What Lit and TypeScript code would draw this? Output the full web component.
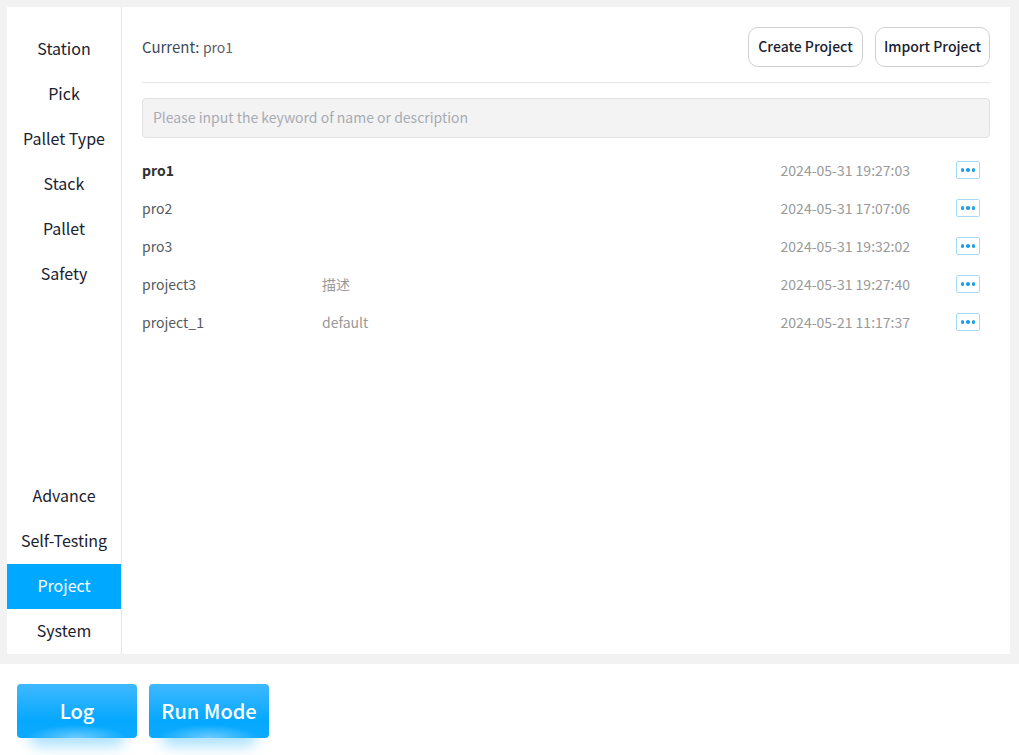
import { LitElement, html, css } from "lit";
import { customElement } from "lit/decorators.js";

const TOP = ["Station", "Pick", "Pallet Type", "Stack", "Pallet", "Safety"];
const BOTTOM = ["Advance", "Self-Testing", "Project", "System"];
const ROWS = [
  { name: "pro1", desc: "", time: "2024-05-31 19:27:03", bold: true },
  { name: "pro2", desc: "", time: "2024-05-31 17:07:06" },
  { name: "pro3", desc: "", time: "2024-05-31 19:32:02" },
  { name: "project3", desc: "描述", time: "2024-05-31 19:27:40" },
  { name: "project_1", desc: "default", time: "2024-05-21 11:17:37" },
];

@customElement("app-root")
export class AppRoot extends LitElement {
  static styles = css`
    :host {
      display: flex;
      flex-direction: column;
      width: 1019px;
      height: 755px;
      overflow: hidden;
      background: #f2f2f2;
      font-family: "Noto Sans CJK SC", "Noto Sans", sans-serif;
      font-size: 14px;
      color: #303133;
    }
    .panel {
      margin: 7px 9px 0 7px;
      height: 647px;
      display: flex;
      background: #fff;
    }
    .side {
      width: 114px;
      border-right: 1px solid #e6e6e6;
      display: flex;
      flex-direction: column;
      justify-content: space-between;
      padding-top: 20px;
    }
    .item {
      height: 45px;
      line-height: 42px;
      text-align: center;
      font-size: 16px;
      color: #1a2230;
    }
    .item.active {
      background: #00a8ff;
      color: #fff;
    }
    .main {
      flex: 1;
      padding: 20px 20px 0;
      min-width: 0;
    }
    .head {
      display: flex;
      align-items: center;
      gap: 12px;
      padding-bottom: 15px;
      border-bottom: 1px solid #e6e6e6;
      margin-bottom: 15px;
    }
    .current {
      flex: 1;
      font-size: 15px;
      color: #3c4a5a;
      padding-bottom: 2px;
    }
    .current span {
      font-size: 14px;
      color: #606266;
    }
    .btn {
      width: 115px;
      height: 40px;
      box-sizing: border-box;
      border: 1px solid #d0d0d4;
      border-radius: 10px;
      background: #fff;
      font: inherit;
      font-weight: 500;
      color: #1a2230;
      padding: 0 0 2px;
    }
    .search {
      display: block;
      width: 100%;
      height: 40px;
      box-sizing: border-box;
      border: 1px solid #e2e2e6;
      border-radius: 4px;
      background: #f3f3f4;
      padding: 0 10px 2px;
      font: inherit;
      outline: none;
    }
    .search::placeholder {
      color: #a8abb2;
      opacity: 1;
    }
    .list {
      margin-top: 13px;
    }
    .row {
      display: flex;
      align-items: center;
      height: 38px;
      color: #555a60;
    }
    .row.bold .name {
      font-weight: 700;
      color: #303133;
    }
    .name {
      width: 180px;
    }
    .desc {
      flex: 1;
      color: #999;
    }
    .time {
      color: #999;
    }
    .more {
      width: 24px;
      height: 18px;
      box-sizing: border-box;
      border: 1px solid #a6dcf8;
      border-radius: 2px;
      margin: 0 10px 0 46px;
      display: flex;
      align-items: center;
      justify-content: center;
      gap: 2px;
    }
    .more i {
      width: 3.5px;
      height: 3.5px;
      border-radius: 50%;
      background: #1d9fe8;
    }
    .foot {
      position: relative;
      z-index: 0;
      margin-top: 10px;
      flex: 1;
      background: #fff;
      display: flex;
      gap: 12px;
      padding: 20px 17px 0;
      align-items: flex-start;
    }
    .run {
      position: relative;
      width: 120px;
      height: 54px;
      border: none;
      border-radius: 4px;
      padding: 0 0 2px;
      font: inherit;
      font-size: 20px;
      font-weight: 500;
      color: #fff;
      background:
        radial-gradient(ellipse 42% 24% at 50% 100%, #6ccbff 0%, rgba(108, 203, 255, 0) 100%),
        linear-gradient(180deg, #3fb8ff 0%, #05a8ff 68%, #0caaff 100%);
    }
    .run::after {
      content: "";
      position: absolute;
      left: 12px;
      right: 12px;
      top: 42px;
      height: 20px;
      border-radius: 10px;
      background: #a8e0ff;
      filter: blur(7px);
      z-index: -1;
    }
  `;

  render() {
    return html`
      <div class="panel">
        <nav class="side">
          <div>${TOP.map((t) => html`<div class="item">${t}</div>`)}</div>
          <div>
            ${BOTTOM.map(
              (t) => html`<div class="item ${t === "Project" ? "active" : ""}">${t}</div>`
            )}
          </div>
        </nav>
        <main class="main">
          <div class="head">
            <div class="current">Current: <span>pro1</span></div>
            <button class="btn">Create Project</button>
            <button class="btn">Import Project</button>
          </div>
          <input class="search" placeholder="Please input the keyword of name or description" />
          <div class="list">
            ${ROWS.map(
              (r) => html`
                <div class="row ${r.bold ? "bold" : ""}">
                  <div class="name">${r.name}</div>
                  <div class="desc">${r.desc}</div>
                  <div class="time">${r.time}</div>
                  <div class="more"><i></i><i></i><i></i></div>
                </div>
              `
            )}
          </div>
        </main>
      </div>
      <footer class="foot">
        <button class="run">Log</button>
        <button class="run">Run Mode</button>
      </footer>
    `;
  }
}
